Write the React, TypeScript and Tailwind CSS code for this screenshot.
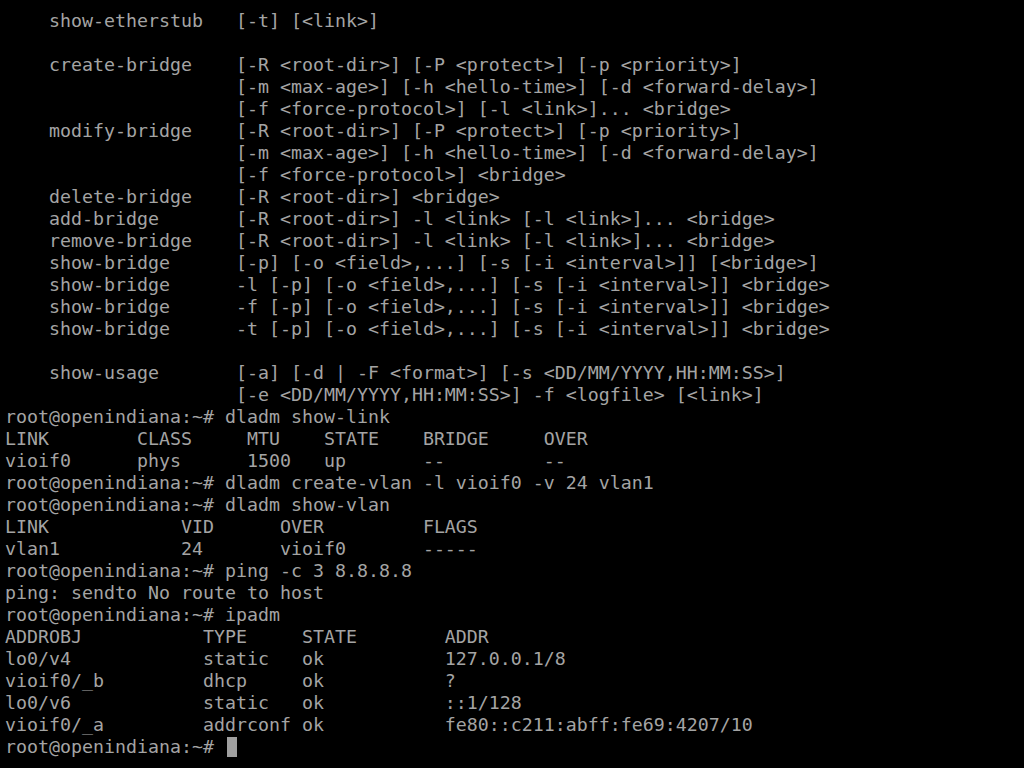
const lines: string[] = [
  "    show-etherstub   [-t] [<link>]",
  "",
  "    create-bridge    [-R <root-dir>] [-P <protect>] [-p <priority>]",
  "                     [-m <max-age>] [-h <hello-time>] [-d <forward-delay>]",
  "                     [-f <force-protocol>] [-l <link>]... <bridge>",
  "    modify-bridge    [-R <root-dir>] [-P <protect>] [-p <priority>]",
  "                     [-m <max-age>] [-h <hello-time>] [-d <forward-delay>]",
  "                     [-f <force-protocol>] <bridge>",
  "    delete-bridge    [-R <root-dir>] <bridge>",
  "    add-bridge       [-R <root-dir>] -l <link> [-l <link>]... <bridge>",
  "    remove-bridge    [-R <root-dir>] -l <link> [-l <link>]... <bridge>",
  "    show-bridge      [-p] [-o <field>,...] [-s [-i <interval>]] [<bridge>]",
  "    show-bridge      -l [-p] [-o <field>,...] [-s [-i <interval>]] <bridge>",
  "    show-bridge      -f [-p] [-o <field>,...] [-s [-i <interval>]] <bridge>",
  "    show-bridge      -t [-p] [-o <field>,...] [-s [-i <interval>]] <bridge>",
  "",
  "    show-usage       [-a] [-d | -F <format>] [-s <DD/MM/YYYY,HH:MM:SS>]",
  "                     [-e <DD/MM/YYYY,HH:MM:SS>] -f <logfile> [<link>]",
  "root@openindiana:~# dladm show-link",
  "LINK        CLASS     MTU    STATE    BRIDGE     OVER",
  "vioif0      phys      1500   up       --         --",
  "root@openindiana:~# dladm create-vlan -l vioif0 -v 24 vlan1",
  "root@openindiana:~# dladm show-vlan",
  "LINK            VID      OVER         FLAGS",
  "vlan1           24       vioif0       -----",
  "root@openindiana:~# ping -c 3 8.8.8.8",
  "ping: sendto No route to host",
  "root@openindiana:~# ipadm",
  "ADDROBJ           TYPE     STATE        ADDR",
  "lo0/v4            static   ok           127.0.0.1/8",
  "vioif0/_b         dhcp     ok           ?",
  "lo0/v6            static   ok           ::1/128",
  "vioif0/_a         addrconf ok           fe80::c211:abff:fe69:4207/10",
];

export default function App() {
  return (
    <div className="w-[1024px] h-[768px] overflow-hidden bg-black pt-[10px] pl-[5px] text-[#a4a4a4] font-['DejaVu_Sans_Mono',monospace] text-[18.27px] leading-[22px]">
      {lines.map((line, i) => (
        <div key={i} className="h-[22px] whitespace-pre">
          {line}
        </div>
      ))}
      <div className="h-[22px] whitespace-pre flex items-center">
        <span>root@openindiana:~# </span>
        <span className="inline-block w-[10px] h-[20px] bg-[#a0a0a0] ml-[2px]" />
      </div>
    </div>
  );
}
